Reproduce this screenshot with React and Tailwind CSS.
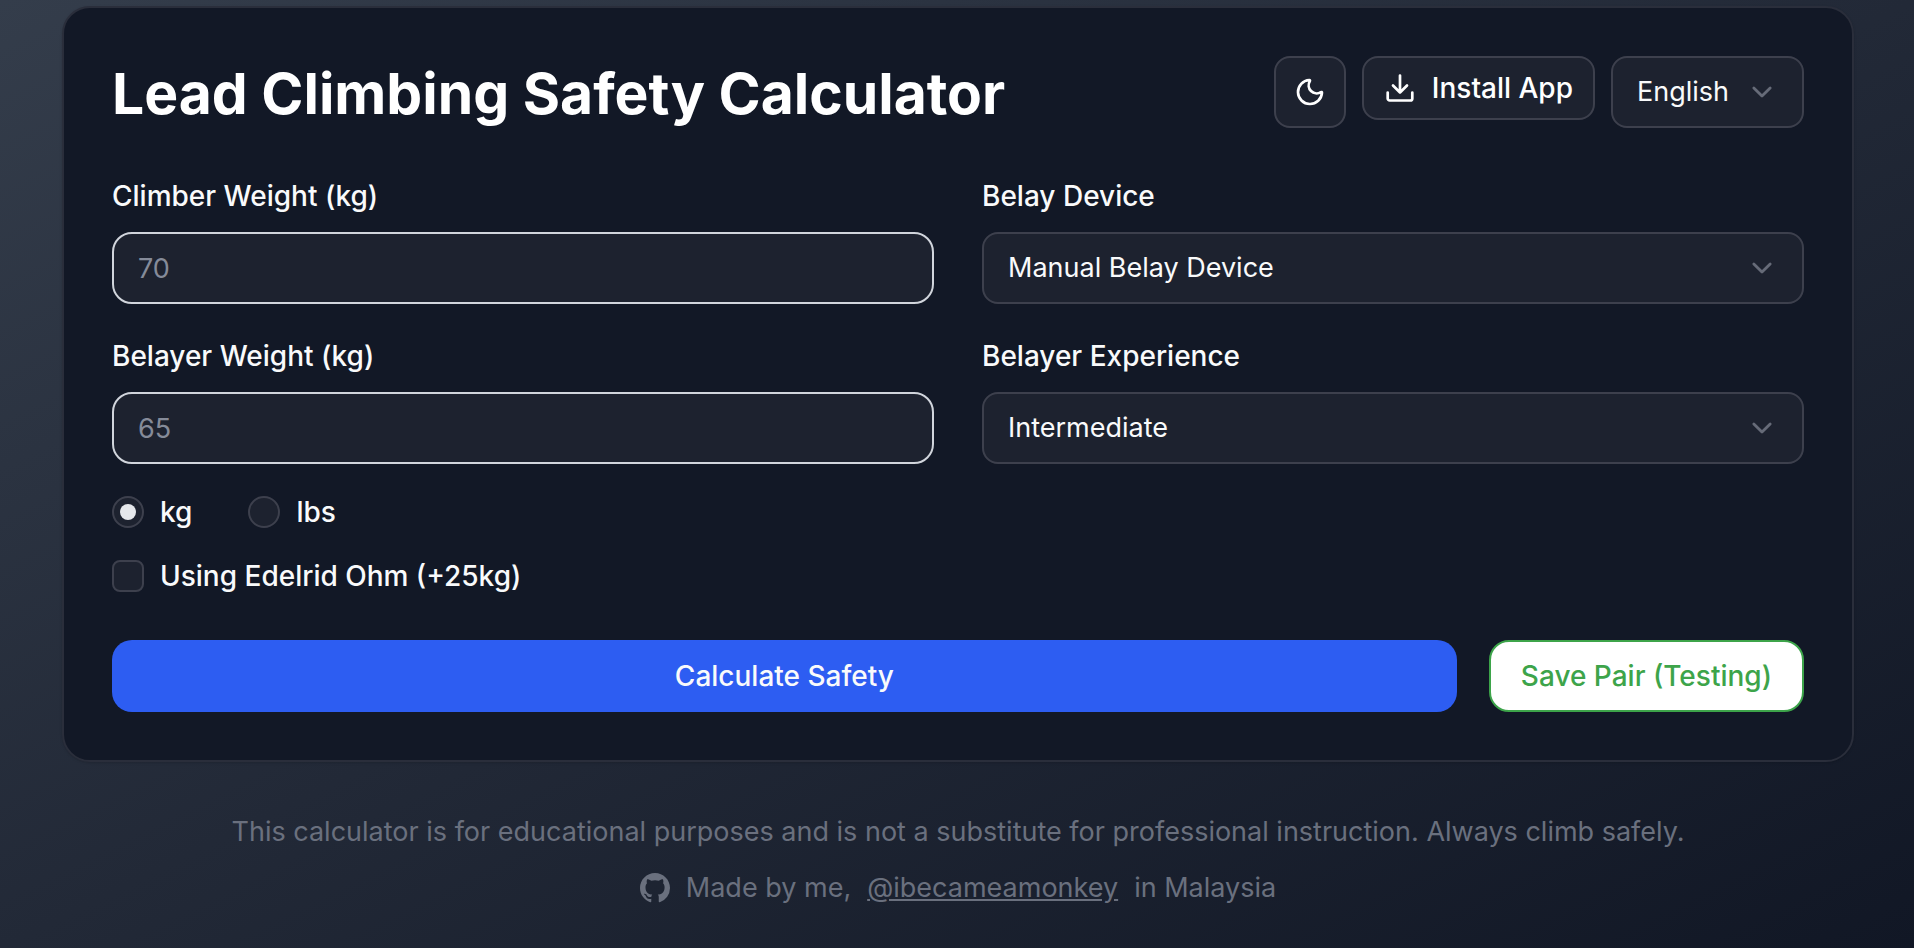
import { useState } from "react";
import { Moon } from "lucide-react";

const field = "h-[72px] border-2 bg-[#1d222f] text-[27px] text-gray-50";

function Chevron() {
  return (
    <svg aria-hidden="true" viewBox="0 0 24 24" className="pointer-events-none col-start-1 row-start-1 mr-7 size-7 justify-self-end" fill="none" stroke="#666b78" strokeWidth="2.4" strokeLinecap="round" strokeLinejoin="round">
      <path d="M5 8.500l7 7 7-7" />
    </svg>
  );
}

function Select({ id, label, options }) {
  return (
    <div className="grid items-center">
      <select id={id} aria-label={label} className={`${field} col-start-1 row-start-1 w-full appearance-none rounded-2xl border-[#3d404d] pr-[72px] pl-6`}>
        {options.map((o) => (
          <option key={o}>{o}</option>
        ))}
      </select>
      <Chevron />
    </div>
  );
}

function Field({ id, label, children }) {
  return (
    <div className="flex flex-col gap-4">
      <label htmlFor={id} className="text-[28px] leading-10 font-medium text-gray-50">{label}</label>
      {children}
    </div>
  );
}

function WeightInput({ id, placeholder }) {
  return <input id={id} type="text" inputMode="decimal" placeholder={placeholder} className={`${field} w-full rounded-[20px] border-gray-300 px-6 placeholder:text-[#858b99]`} />;
}

export default function App() {
  const [unit, setUnit] = useState("kg");
  return (
    <main className="min-h-screen bg-linear-to-br from-[#343d4b] via-[#222937] to-[#111725] pt-[6px] pr-[60px] pb-8 pl-[62px] font-['Inter','Liberation_Sans',sans-serif]">
      <section className="rounded-[28px] border-2 border-[#2a2e3b] bg-[#121826] p-12 shadow-sm">
        <header className="flex items-start justify-between">
          <h1 className="text-[57px] leading-[76px] font-bold text-white">Lead Climbing Safety Calculator</h1>
          <div className="flex items-start gap-4">
            <button type="button" aria-label="Toggle dark mode" className="flex size-[72px] items-center justify-center rounded-2xl border-2 border-[#3d404d] bg-[#1d222f] text-white">
              <Moon className="size-8" />
            </button>
            <button type="button" className="flex h-16 items-center gap-4 rounded-2xl border-2 border-[#3d404d] bg-[#1d222f] px-5 text-[28px] font-medium text-white">
              <svg aria-hidden="true" viewBox="0 0 32 32" className="size-8" fill="none" stroke="currentColor" strokeWidth="2.7" strokeLinecap="round" strokeLinejoin="round">
                <path d="M16 3.500v17M9 13.500l7 7 7-7M3.700 20.500v6a2 2 0 0 0 2 2h20.600a2 2 0 0 0 2-2v-6" />
              </svg>
              Install App
            </button>
            <Select id="language" label="Language" options={["English", "Malay"]} />
          </div>
        </header>

        <form onSubmit={(e) => e.preventDefault()}>
          <div className="mt-11 grid grid-cols-2 gap-x-12 gap-y-8">
            <Field id="climber" label="Climber Weight (kg)">
              <WeightInput id="climber" placeholder="70" />
            </Field>
            <Field id="device" label="Belay Device">
              <Select id="device" options={["Manual Belay Device", "Assisted Braking Device"]} />
            </Field>
            <Field id="belayer" label="Belayer Weight (kg)">
              <WeightInput id="belayer" placeholder="65" />
            </Field>
            <Field id="experience" label="Belayer Experience">
              <Select id="experience" options={["Intermediate", "Beginner", "Expert"]} />
            </Field>
          </div>

          <div role="radiogroup" aria-label="Weight unit" className="mt-8 flex gap-14">
            {["kg", "lbs"].map((u) => (
              <label key={u} className="flex h-8 items-center gap-4 text-[28px] font-medium text-gray-50">
                <span className="grid place-items-center">
                  <input type="radio" name="unit" checked={unit === u} onChange={() => setUnit(u)} className="peer col-start-1 row-start-1 size-8 appearance-none rounded-full border-2 border-[#3d404d] bg-[#1d222f]" />
                  <span className="pointer-events-none col-start-1 row-start-1 hidden size-4 rounded-full bg-gray-200 peer-checked:block" />
                </span>
                {u}
              </label>
            ))}
          </div>

          <label className="mt-8 flex h-8 w-fit items-center gap-4 text-[28px] font-medium text-gray-50">
            <input type="checkbox" className="size-8 appearance-none rounded-lg border-2 border-[#3d404d] bg-[#1d222f] checked:bg-blue-600" />
            Using Edelrid Ohm (+25kg)
          </label>

          <div className="mt-12 flex gap-8">
            <button type="submit" className="h-[72px] grow rounded-[20px] bg-[#2d5df2] text-[28px] font-medium text-gray-50">Calculate Safety</button>
            <button type="button" className="h-[72px] rounded-[20px] border-2 border-[#3da44a] bg-white px-[30px] text-[28px] font-medium text-[#3da44a]">Save Pair (Testing)</button>
          </div>
        </form>
      </section>

      <footer className="mt-[50px] flex flex-col items-center gap-4 text-[27px] leading-10 text-[#6a707e]">
        <p>This calculator is for educational purposes and is not a substitute for professional instruction. Always climb safely.</p>
        <p className="flex items-center gap-4">
          <svg aria-hidden="true" viewBox="0 0 16 16" className="size-[30px]" fill="currentColor">
            <path d="M8 0C3.580 0 0 3.580 0 8c0 3.540 2.290 6.530 5.470 7.590.4.070.55-.17.55-.38 0-.19-.01-.82-.01-1.490-2.010.37-2.530-.49-2.690-.94-.09-.23-.48-.94-.82-1.130-.28-.15-.68-.52-.01-.53.63-.01 1.080.58 1.230.82.72 1.210 1.870.87 2.330.66.07-.52.28-.87.51-1.070-1.780-.2-3.640-.89-3.640-3.950 0-.87.31-1.590.82-2.150-.08-.2-.36-1.020.08-2.120 0 0 .67-.21 2.200.82.64-.18 1.320-.27 2-.27s1.360.09 2 .27c1.530-1.040 2.200-.82 2.200-.82.44 1.100.16 1.920.08 2.120.51.56.82 1.270.82 2.150 0 3.070-1.870 3.750-3.650 3.950.29.25.54.73.54 1.480 0 1.070-.01 1.930-.01 2.200 0 .21.15.46.55.38A8.010 8.010 0 0 0 16 8c0-4.420-3.580-8-8-8Z" />
          </svg>
          <span>Made by me,</span>
          <a href="#ibecameamonkey" className="underline">@ibecameamonkey</a>
          <span>in Malaysia</span>
        </p>
      </footer>
    </main>
  );
}
